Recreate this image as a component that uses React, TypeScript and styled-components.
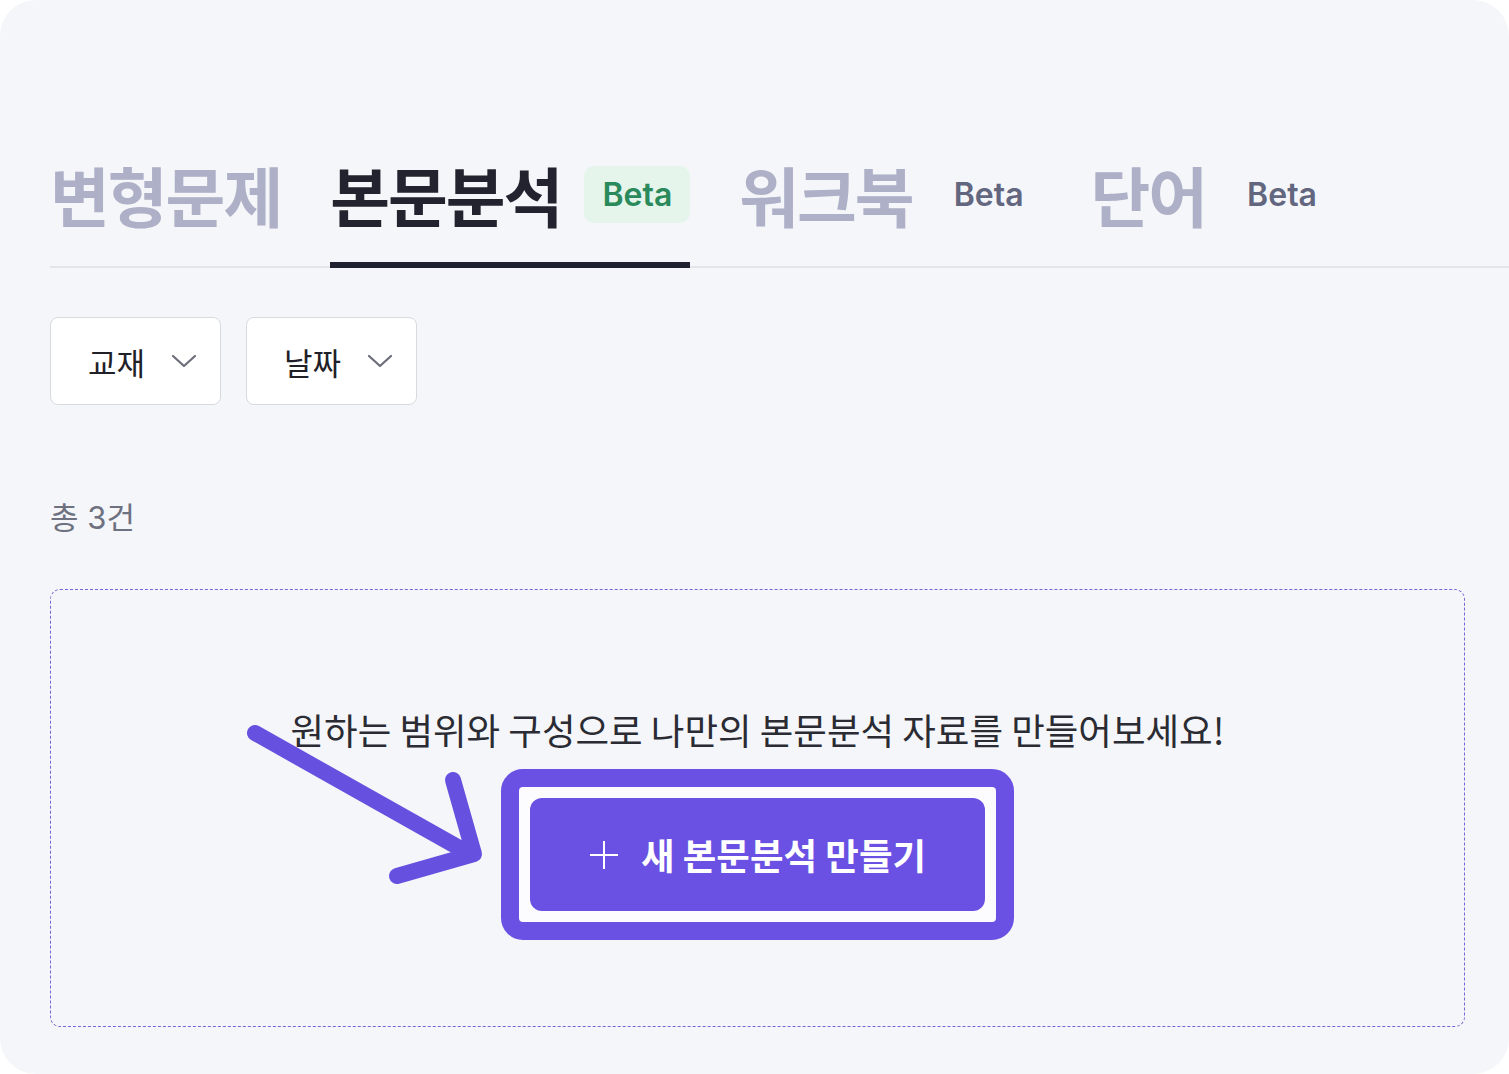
import styled, { createGlobalStyle } from 'styled-components';

const GlobalStyle = createGlobalStyle`
  html, body {
    margin: 0;
    padding: 0;
    background: #ffffff;
  }
  body {
    font-family: "Inter", "Noto Sans CJK KR", sans-serif;
  }
  * {
    box-sizing: border-box;
  }
`;

const Card = styled.div`
  position: relative;
  width: 1509px;
  height: 1074px;
  border-radius: 36px;
  background: #f5f6f9;
  padding: 155px 0 0 50px;
  overflow: hidden;
`;

const TabBar = styled.div`
  display: flex;
  align-items: flex-end;
  gap: 49px;
  border-bottom: 2px solid #e4e5ea;
`;

const Tab = styled.div<{ $active?: boolean }>`
  display: flex;
  align-items: center;
  gap: 23px;
  padding-bottom: 29px;
  margin-bottom: -2px;
  border-bottom: 6px solid ${(p) => (p.$active ? '#1f2030' : 'transparent')};
`;

const TabLabel = styled.span<{ $active?: boolean }>`
  font-family: "Noto Sans CJK KR", sans-serif;
  font-size: 65px;
  font-weight: 700;
  letter-spacing: -2px;
  line-height: 1.2;
  color: ${(p) => (p.$active ? '#22232f' : '#adb0c6')};
`;

const Badge = styled.span<{ $active?: boolean }>`
  display: inline-flex;
  align-items: center;
  height: 57px;
  padding: 0 18px;
  border-radius: 10px;
  font-family: "Inter", sans-serif;
  font-size: 32px;
  font-weight: 600;
  color: ${(p) => (p.$active ? '#2a8a5c' : '#62667f')};
  background: ${(p) => (p.$active ? '#e5f5eb' : 'transparent')};
`;

const Body = styled.div`
  padding-right: 44px;
`;

const Filters = styled.div`
  display: flex;
  gap: 25px;
  margin-top: 49px;
`;

const Select = styled.button`
  display: flex;
  align-items: center;
  gap: 26px;
  width: 171px;
  height: 88px;
  padding: 0 20px 0 37px;
  background: #ffffff;
  border: 1.5px solid #d9dadf;
  border-radius: 8px;
  font-family: "Noto Sans CJK KR", sans-serif;
  font-size: 31px;
  white-space: nowrap;
  color: #1f2028;
  cursor: pointer;

  svg {
    flex-shrink: 0;
  }
`;

const Count = styled.div`
  margin-top: 91px;
  font-family: "Inter", "Noto Sans CJK KR", sans-serif;
  font-size: 31px;
  color: #6e7180;
  line-height: 1.4;
`;

const EmptyBox = styled.div`
  margin-top: 50px;
  height: 438px;
  border: 1.5px dashed #7566d8;
  border-radius: 10px;
  display: flex;
  flex-direction: column;
  align-items: center;
  padding-top: 114px;
`;

const Message = styled.p`
  margin: 0;
  font-family: "Noto Sans CJK KR", sans-serif;
  font-size: 36.5px;
  line-height: 1.4;
  color: #2a2b33;
`;

const Highlight = styled.div`
  margin-top: 14px;
  padding: 11px;
  border: 18px solid #6a51e3;
  border-radius: 22px;
  background: #fcfcfe;
`;

const CreateButton = styled.button`
  display: flex;
  align-items: center;
  justify-content: center;
  gap: 22px;
  width: 455px;
  height: 113px;
  border: none;
  border-radius: 12px;
  background: #6a51e3;
  color: #ffffff;
  font-family: "Noto Sans CJK KR", sans-serif;
  font-size: 36.5px;
  font-weight: 700;
  cursor: pointer;
`;

const ArrowLayer = styled.svg`
  position: absolute;
  left: 0;
  top: 0;
  pointer-events: none;
`;

const Chevron = () => (
  <svg width="26" height="16" viewBox="0 0 26 16" fill="none">
    <path d="M2 3l11 10L24 3" stroke="#6b6d78" strokeWidth="2.2" strokeLinecap="round" strokeLinejoin="round" />
  </svg>
);

const Plus = () => (
  <svg width="30" height="30" viewBox="0 0 30 30" fill="none">
    <path d="M15 1v28M1 15h28" stroke="#ffffff" strokeWidth="2" />
  </svg>
);

const tabs = [
  { label: '변형문제' },
  { label: '본문분석', badge: 'Beta', active: true },
  { label: '워크북', badge: 'Beta' },
  { label: '단어', badge: 'Beta' },
];

export default function App() {
  return (
    <>
      <GlobalStyle />
      <Card>
        <TabBar>
          {tabs.map((t) => (
            <Tab key={t.label} $active={t.active}>
              <TabLabel $active={t.active}>{t.label}</TabLabel>
              {t.badge && <Badge $active={t.active}>{t.badge}</Badge>}
            </Tab>
          ))}
        </TabBar>
        <Body>
          <Filters>
            <Select>
              교재
              <Chevron />
            </Select>
            <Select>
              날짜
              <Chevron />
            </Select>
          </Filters>
          <Count>총 3건</Count>
          <EmptyBox>
            <Message>원하는 범위와 구성으로 나만의 본문분석 자료를 만들어보세요!</Message>
            <Highlight>
              <CreateButton>
                <Plus />
                새 본문분석 만들기
              </CreateButton>
            </Highlight>
          </EmptyBox>
        </Body>
        <ArrowLayer width="1509" height="1074" viewBox="0 0 1509 1074">
          <g stroke="#6650e0" strokeWidth="16" strokeLinecap="round" strokeLinejoin="round" fill="none">
            <path d="M255 733L470 854" />
            <path d="M453 780L474 854L397 876" />
          </g>
        </ArrowLayer>
      </Card>
    </>
  );
}
